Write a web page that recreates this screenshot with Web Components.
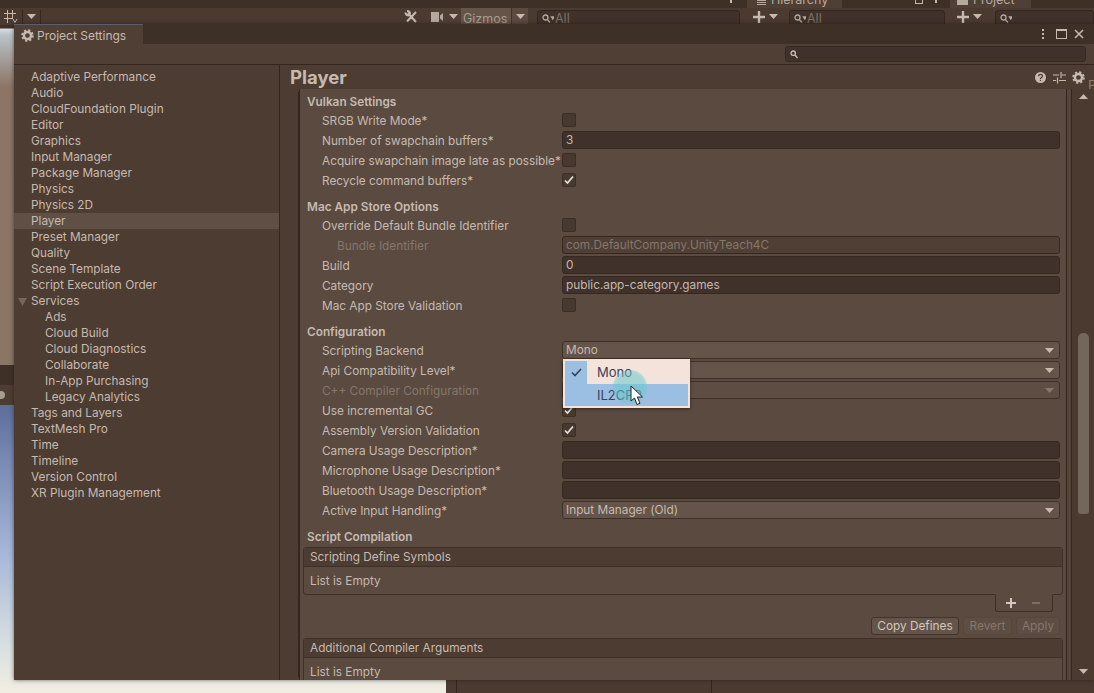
<!DOCTYPE html>
<html lang="en">
<head>
<meta charset="utf-8">
<title>Project Settings</title>
<style>
  html, body { margin: 0; height: 100%; overflow: hidden; background: #4a3a30; }
  body { font: 11.8px/16px Inter, "Liberation Sans", sans-serif; color: #c6bab0; }
</style>
</head>
<body>

<editor-backdrop></editor-backdrop>

<settings-window>
  <side-list slot="side">
    <side-item>Adaptive Performance</side-item>
    <side-item>Audio</side-item>
    <side-item>CloudFoundation Plugin</side-item>
    <side-item>Editor</side-item>
    <side-item>Graphics</side-item>
    <side-item>Input Manager</side-item>
    <side-item>Package Manager</side-item>
    <side-item>Physics</side-item>
    <side-item>Physics 2D</side-item>
    <side-item selected>Player</side-item>
    <side-item>Preset Manager</side-item>
    <side-item>Quality</side-item>
    <side-item>Scene Template</side-item>
    <side-item>Script Execution Order</side-item>
    <side-item open>Services</side-item>
    <side-item child>Ads</side-item>
    <side-item child>Cloud Build</side-item>
    <side-item child>Cloud Diagnostics</side-item>
    <side-item child>Collaborate</side-item>
    <side-item child>In-App Purchasing</side-item>
    <side-item child>Legacy Analytics</side-item>
    <side-item>Tags and Layers</side-item>
    <side-item>TextMesh Pro</side-item>
    <side-item>Time</side-item>
    <side-item>Timeline</side-item>
    <side-item>Version Control</side-item>
    <side-item>XR Plugin Management</side-item>
  </side-list>

  <player-section title="Vulkan Settings">
    <set-row label="SRGB Write Mode*"><check-box></check-box></set-row>
    <set-row label="Number of swapchain buffers*"><text-field>3</text-field></set-row>
    <set-row label="Acquire swapchain image late as possible*"><check-box></check-box></set-row>
    <set-row label="Recycle command buffers*"><check-box checked></check-box></set-row>
  </player-section>

  <player-section title="Mac App Store Options">
    <set-row label="Override Default Bundle Identifier"><check-box></check-box></set-row>
    <set-row label="Bundle Identifier" indent dim><text-field dim>com.DefaultCompany.UnityTeach4C</text-field></set-row>
    <set-row label="Build"><text-field>0</text-field></set-row>
    <set-row label="Category"><text-field>public.app-category.games</text-field></set-row>
    <set-row label="Mac App Store Validation"><check-box></check-box></set-row>
  </player-section>

  <player-section title="Configuration">
    <set-row label="Scripting Backend"><drop-field>Mono</drop-field></set-row>
    <set-row label="Api Compatibility Level*"><drop-field></drop-field></set-row>
    <set-row label="C++ Compiler Configuration" dim><drop-field dim></drop-field></set-row>
    <set-row label="Use incremental GC"><check-box checked></check-box></set-row>
    <set-row label="Assembly Version Validation"><check-box checked></check-box></set-row>
    <set-row label="Camera Usage Description*"><text-field></text-field></set-row>
    <set-row label="Microphone Usage Description*"><text-field></text-field></set-row>
    <set-row label="Bluetooth Usage Description*"><text-field></text-field></set-row>
    <set-row label="Active Input Handling*"><drop-field>Input Manager (Old)</drop-field></set-row>
  </player-section>

  <player-section title="Script Compilation">
    <empty-list title="Scripting Define Symbols" footer></empty-list>
    <action-bar>
      <mini-button style="width:88px">Copy Defines</mini-button>
      <mini-button off style="width:49px">Revert</mini-button>
      <mini-button off style="width:44px">Apply</mini-button>
    </action-bar>
    <empty-list title="Additional Compiler Arguments"></empty-list>
  </player-section>

  <popup-menu slot="over">
    <popup-item checked>Mono</popup-item>
    <popup-item active>IL2CPP</popup-item>
  </popup-menu>
</settings-window>

<script>
// helper: every element is just a style + markup in an open shadow root
function shadow(el, html) {
  el.attachShadow({ mode: "open" }).innerHTML = html;
}

const GEAR = (size, color) => `
  <svg width="${size}" height="${size}" viewBox="0 0 16 16">
    <circle cx="8" cy="8" r="4.4" fill="none" stroke="${color}" stroke-width="3"/>
    <circle cx="8" cy="8" r="6.4" fill="none" stroke="${color}" stroke-width="2.6" stroke-dasharray="2.6 2.43"/>
  </svg>`;

const ARROW = (color) => `
  <svg width="9" height="5" viewBox="0 0 9 5" style="flex:none"><path d="M0 0h9L4.500 5z" fill="${color}"/></svg>`;

const PLUS = `
  <svg width="12" height="12" viewBox="0 0 12 12" style="flex:none"><path d="M4.800 0h2.400v4.800H12v2.400H7.200V12H4.800V7.200H0V4.800h4.800z" fill="#c6bab0"/></svg>`;

const LENS = `
  <svg width="12" height="10" viewBox="0 0 12 10" fill="none" stroke="#b5a89d" stroke-width="1.300" style="flex:none"><circle cx="3.500" cy="3.500" r="2.500"/><path d="M5.300 5.500l2.700 3M9.500 3h2.500l-1.250 2z"/></svg>`;

// --- the editor behind the window
class EditorBackdrop extends HTMLElement {
  connectedCallback() {
    shadow(this, /* html */`
      <style>
        :host { display: flex; flex-direction: column; height: 693px; width: 1094px; font-size: 12.500px; color: #a99c91; }
        .tabs { height: 8px; background: #3f3027; display: flex; align-items: flex-start; overflow: hidden; }
        .tab { flex: none; background: #4f3f35; height: 8px; display: flex; align-items: flex-start; box-sizing: border-box; overflow: hidden; gap: 5px; color: #b5a89d; }
        .tab span { margin-top: -8px; }
        .tab.h { margin-left: 15px; width: 95px; padding-left: 10px; }
        .tab.p { margin-left: 13px; width: 81px; padding-left: 7px; }
        .tab i { display: block; flex: none; width: 11px; height: 5px; background: #b5a89d; }
        .tab i.l { height: 1px; width: 9px; margin-top: 2px; box-shadow: 0 -2px #b5a89d, 0 2px #b5a89d; }
        .mini { flex: none; margin-left: 73px; width: 8px; height: 4px; border: 1px solid #c6bab0; border-top: 0; box-sizing: border-box; }
        .dot { flex: none; width: 2px; height: 3px; background: #c6bab0; }
        .tools { height: 17px; background: #4a3a30; display: flex; align-items: center; overflow: hidden; }
        .grid { margin-left: 3px; width: 15px; height: 15px; flex: none; }
        .sep { flex: none; width: 1px; height: 14px; background: #35281f; margin: 0 4px; }
        .gap { flex: none; display: block; }
        .cam { flex: none; height: 17px; width: 30px; margin-left: 13px; background: #4f3f35; display: flex; align-items: center; gap: 6px; box-sizing: border-box; }
        .giz { flex: none; background: #64544a; height: 17px; width: 50px; padding-left: 2px; box-sizing: border-box; line-height: 21px; }
        .gizarrow { flex: none; background: #5a4a40; height: 17px; width: 17px; display: flex; align-items: center; justify-content: center; border-left: 1px solid #40312a; box-sizing: border-box; }
        .search { flex: none; height: 16px; box-sizing: border-box; margin-top: 3px; background: #40312a; border: 1px solid #33261e; border-bottom: 0; border-radius: 4px 4px 0 0; padding-left: 4px; display: flex; align-items: center; gap: 1px; color: #7d7066; }
        .rest { flex: 1; display: grid; grid-template-columns: 446px 1fr; min-height: 0; }
        .scene { display: flex; flex-direction: column; }
        .sky { height: 340px; background: linear-gradient(#3f3027 0, #3f3027 3px, #d6dde2 4px, #b9c3c8 10px, #8c7566 62px, #8b7565 340px); }
        .strip { height: 20px; background: #3f3027; }
        .slide { height: 20px; background: #4d3d33; position: relative; }
        .slide i { position: absolute; left: -3px; top: 6px; width: 8px; height: 8px; border-radius: 50%; background: #a99c91; }
        .game { flex: 1; background: linear-gradient(#5d6e9d 0, #a7b8d9 150px, #d7e0e0 240px, #f3eee2 290px); }
        .lower { background: #4a3a30; display: grid; grid-template-columns: 11px 255px 1fr; }
        .lower div { border-right: 1px solid #33261e; }
      </style>
      <div class="tabs">
        <div class="dot" style="margin-left:730px"></div>
        <div class="tab h"><i class="l"></i><span>Hierarchy</span></div>
        <div class="mini"></div>
        <div class="dot" style="margin-left:12px"></div>
        <div class="tab p"><i></i><span>Project</span></div>
      </div>
      <div class="tools">
        <svg class="grid" viewBox="0 0 15 15" fill="none" stroke="#c6bab0" stroke-width="1">
          <path d="M1 4.500h12M1 9.500h9M4.500 1v13M9.500 1v9M10 10l2 3.500 2-3.500"/>
        </svg>
        <span class="sep"></span>
        ${ARROW("#c6bab0")}
        <span class="sep"></span>
        <span class="gap" style="width:359px"></span>
        <svg width="14" height="14" viewBox="0 0 14 14" fill="none" stroke="#c6bab0" stroke-width="2" style="flex:none"><path d="M4 3l8 9M1.500 2.500a3 3 0 0 0 3.500 3M3 1a3 3 0 0 1 3 3M12 2L3 11.500"/></svg>
        <div class="cam">
          <svg width="12" height="10" viewBox="0 0 12 10" style="flex:none"><path d="M0 0h8v10H0zM9 3.500l3-2.500v8l-3-2.500z" fill="#b5a89d"/></svg>
          ${ARROW("#c6bab0")}
        </div>
        <div class="giz">Gizmos</div>
        <div class="gizarrow">${ARROW("#c6bab0")}</div>
        <span class="gap" style="width:9px"></span>
        <div class="search" style="width:203px">${LENS}All</div>
        <span class="gap" style="width:13px"></span>
        ${PLUS}<span class="gap" style="width:4px"></span>${ARROW("#c6bab0")}
        <span class="gap" style="width:11px"></span>
        <div class="search" style="width:156px">${LENS}All</div>
        <span class="gap" style="width:12px"></span>
        ${PLUS}<span class="gap" style="width:4px"></span>${ARROW("#c6bab0")}
        <span class="gap" style="width:13px"></span>
        <div class="search" style="flex:1">${LENS}</div>
      </div>
      <div class="rest">
        <div class="scene">
          <div class="sky"></div>
          <div class="strip"></div>
          <div class="slide"><i></i></div>
          <div class="game"></div>
        </div>
        <div class="lower"><div></div><div></div><span></span></div>
      </div>
    `);
  }
}

// --- the floating window: tab strip, search strip, sidebar + player pane
class SettingsWindow extends HTMLElement {
  connectedCallback() {
    shadow(this, /* html */`
      <style>
        :host {
          position: absolute; left: 14px; top: 24px; width: 1080px; height: 656px;
          display: flex; flex-direction: column; background: #4c3c32;
          box-shadow: 0 0 4px rgba(30,20,15,.6);
        }
        .tabbar { height: 20px; background: #3f3027; display: flex; flex: none; }
        .tab {
          width: 129px; height: 20px; box-sizing: border-box; background: #4f3f35; font-size: 12px;
          border-top: 1px solid #56606f; display: flex; align-items: center; gap: 3px; padding: 2px 0 0 7px;
        }
        .winbtns { margin-left: auto; display: flex; align-items: center; gap: 7px; padding-right: 10px; }
        .winbtns .max { width: 9px; height: 7px; border: 1px solid #c6bab0; border-top-width: 2px; }
        .dots { display: flex; flex-direction: column; gap: 2px; margin-right: 5px; }
        .dots i { width: 2px; height: 2px; background: #c6bab0; }
        .searchbar { height: 21px; flex: none; box-sizing: border-box; background: #4f3f35; border-bottom: 1px solid #33261e; display: flex; justify-content: flex-end; padding: 2px 8px 0 0; }
        .searchbar div { width: 301px; height: 16px; box-sizing: border-box; background: #40312a; border: 1px solid #38291f; border-radius: 3px; display: flex; align-items: center; padding-left: 4px; }
        .main { flex: 1; display: flex; min-height: 0; position: relative; }
        .side { width: 265px; flex: none; border-right: 1px solid #33261e; }
        .pane { flex: 1; display: flex; flex-direction: column; min-width: 0; }
        .head { height: 24px; flex: none; display: flex; align-items: center; padding: 0 9px 0 10px; font-size: 18.500px; font-weight: 700; position: relative; }
        .head span { flex: 1; }
        .head svg { margin-left: 6px; }
        .head b { position: absolute; right: -2px; top: 12px; font-size: 12px; font-weight: 400; color: #8d7f74; }
        .scroll { flex: 1; display: flex; min-height: 0; margin-left: 19px; box-shadow: -4px 0 0 -3px #33261e; }
        .body { width: 768px; flex: none; box-sizing: border-box; background: #5a4a40; border-left: 1px solid #33261e; border-right: 1px solid #33261e; padding: 3px 4px 0 3px; overflow: hidden; }
        .gutter { width: 4px; flex: none; background: #54443a; }
        .bar { flex: 1; position: relative; background: #4a3a30; border-left: 1px solid #33261e; }
        .bar i { position: absolute; left: 6px; width: 11px; top: 244px; height: 181px; background: #75665b; border-radius: 5px 5px 3px 3px; }
        .bar svg { position: absolute; left: 7px; }
      </style>
      <div class="tabbar">
        <div class="tab">${GEAR(13, "#c6bab0")}Project Settings</div>
        <div class="winbtns">
          <div class="dots"><i></i><i></i><i></i></div>
          <div class="max"></div>
          <svg width="10" height="10" viewBox="0 0 10 10"><path d="M1 1l8 8M9 1l-8 8" stroke="#c6bab0" stroke-width="1.500"/></svg>
        </div>
      </div>
      <div class="searchbar">
        <div><svg width="8" height="9" viewBox="0 0 8 9" fill="none" stroke="#c6bab0" stroke-width="1.400"><circle cx="3.200" cy="3.200" r="2.200"/><path d="M5 5l2.500 3"/></svg></div>
      </div>
      <div class="main">
        <div class="side"><slot name="side"></slot></div>
        <div class="pane">
          <div class="head">
            <span>Player</span>
            <svg width="11" height="11" viewBox="0 0 11 11"><circle cx="5.500" cy="5.500" r="5.500" fill="#c6bab0"/><path d="M3.700 4.200c0-2.400 3.700-2.400 3.700 0 0 1.400-1.900 1.300-1.900 2.700M5.500 7.700v1.300" fill="none" stroke="#4c3c32" stroke-width="1.300"/></svg>
            <svg width="13" height="13" viewBox="0 0 13 13" fill="none" stroke="#c6bab0" stroke-width="1.200" style="margin-left:7px"><path d="M0 4h6M9 4h4M8 1v6M0 9.500h3M6 9.500h7M4.500 6.500v6"/></svg>
            ${GEAR(13, "#c6bab0")}
            <b>P</b>
          </div>
          <div class="scroll">
            <div class="body"><slot></slot></div>
            <div class="gutter"></div>
            <div class="bar">
              <svg style="top:5px" width="9" height="5" viewBox="0 0 9 5"><path d="M0 5h9L4.500 0z" fill="#c6bab0"/></svg>
              <i></i>
              <svg style="top:580px" width="9" height="5" viewBox="0 0 9 5"><path d="M0 0h9L4.500 5z" fill="#c6bab0"/></svg>
            </div>
          </div>
        </div>
        <slot name="over"></slot>
      </div>
    `);
  }
}

class SideList extends HTMLElement {
  connectedCallback() {
    shadow(this, `<style>:host{display:block;padding-top:4px}</style><slot></slot>`);
  }
}

class SideItem extends HTMLElement {
  connectedCallback() {
    const open = this.hasAttribute("open");
    shadow(this, /* html */`
      <style>
        :host { display: block; height: 16px; line-height: 16px; padding-left: 17px; position: relative; white-space: nowrap; }
        :host([child]) { padding-left: 31px; }
        :host([selected]) { background: #5f4f45; }
        svg { position: absolute; left: 4px; top: 5px; }
      </style>
      ${open ? `<svg width="9" height="8" viewBox="0 0 9 8"><path d="M0 0h9L4.500 8z" fill="#75665c"/></svg>` : ""}
      <slot></slot>
    `);
  }
}

class PlayerSection extends HTMLElement {
  connectedCallback() {
    shadow(this, /* html */`
      <style>
        :host { display: block; margin-bottom: 6px; }
        .title { height: 19px; line-height: 20px; padding-left: 4px; font-weight: 600; }
      </style>
      <div class="title">${this.getAttribute("title")}</div>
      <slot></slot>
    `);
  }
}

class SetRow extends HTMLElement {
  connectedCallback() {
    shadow(this, /* html */`
      <style>
        :host { display: grid; grid-template-columns: 259px 498px; height: 20px; align-items: center; white-space: nowrap; }
        .label { padding-left: 19px; }
        :host([indent]) .label { padding-left: 34px; }
        :host([dim]) .label { color: #85776c; }
        /* los controles van 1px por encima del centro de la fila */
        ::slotted(*) { margin-bottom: 2px; }
      </style>
      <div class="label">${this.getAttribute("label")}</div>
      <slot></slot>
    `);
  }
}

class CheckBox extends HTMLElement {
  connectedCallback() {
    const on = this.hasAttribute("checked");
    shadow(this, /* html */`
      <style>
        :host { display: block; width: 14px; height: 14px; box-sizing: border-box; background: #483930; border: 1px solid #3c2e25; border-radius: 2px; }
        svg { display: block; margin: 1px; }
      </style>
      ${on ? `<svg width="10" height="10" viewBox="0 0 10 10"><path d="M1 5.500l2.500 2.500 5.500-6.500" fill="none" stroke="#e8dfd8" stroke-width="1.700"/></svg>` : ""}
    `);
  }
}

class TextField extends HTMLElement {
  connectedCallback() {
    shadow(this, /* html */`
      <style>
        :host { display: block; height: 18px; line-height: 17px; box-sizing: border-box; padding-left: 3px; background: #40312a; border: 1px solid #35281f; border-radius: 3px; }
        :host([dim]) { background: #4f3f35; color: #85776c; }
      </style>
      <slot></slot>
    `);
  }
}

class DropField extends HTMLElement {
  connectedCallback() {
    shadow(this, /* html */`
      <style>
        :host { display: flex; align-items: center; justify-content: space-between; height: 18px; box-sizing: border-box; padding: 0 5px 0 3px; background: #64544a; border: 1px solid #3f3027; border-radius: 3px; }
        :host([dim]) { background: #5d4d43; }
      </style>
      <span><slot></slot></span>${ARROW(this.hasAttribute("dim") ? "#85776c" : "#c6bab0")}
    `);
  }
}

class EmptyList extends HTMLElement {
  connectedCallback() {
    const foot = this.hasAttribute("footer");
    shadow(this, /* html */`
      <style>
        :host { display: block; width: 760px; position: relative; margin-top: 1px; }
        .frame { border: 1px solid #3f3027; border-radius: 3px; }
        .head { height: 18px; line-height: 18px; padding-left: 6px; background: #4c3c32; border-bottom: 1px solid #3f3027; }
        .body { height: 27px; line-height: 28px; padding-left: 6px; }
        .foot { position: relative; height: 19px; margin-top: -1px; }
        .foot div { position: absolute; right: 10px; top: 0; width: 58px; height: 18px; box-sizing: border-box; background: #5a4a40; border: 1px solid #3f3027; border-top: 1px solid #5a4a40; border-radius: 0 0 3px 3px; display: flex; align-items: center; gap: 16px; padding-left: 10px; }
      </style>
      <div class="frame">
        <div class="head">${this.getAttribute("title")}</div>
        <div class="body">List is Empty</div>
      </div>
      ${foot ? `<div class="foot"><div>
        <svg width="10" height="10" viewBox="0 0 10 10"><path d="M4 0h2v4h4v2H6v4H4V6H0V4h4z" fill="#d3c8be"/></svg>
        <svg width="8" height="10" viewBox="0 0 8 10"><path d="M0 4.200h8v1.600H0z" fill="#85776c"/></svg>
      </div></div>` : ""}
    `);
  }
}

class ActionBar extends HTMLElement {
  connectedCallback() {
    shadow(this, `<style>:host{display:flex;justify-content:flex-end;gap:4px;width:757px;height:20px;margin-top:4px}</style><slot></slot>`);
  }
}

class MiniButton extends HTMLElement {
  connectedCallback() {
    shadow(this, /* html */`
      <style>
        :host { display: block; height: 18px; line-height: 17px; box-sizing: border-box; text-align: center; background: #64544a; border: 1px solid #433429; border-radius: 3px; color: #d3c8be; }
        :host([off]) { background: #5d4d43; border-color: #56463c; color: #85776c; }
      </style>
      <slot></slot>
    `);
  }
}

// --- open dropdown with the mouse cursor on it
class PopupMenu extends HTMLElement {
  connectedCallback() {
    shadow(this, /* html */`
      <style>
        :host { position: absolute; left: 549px; top: 294px; width: 127px; height: 49px; box-sizing: border-box; padding: 2px; background: #f3e3da; box-shadow: 0 1px 3px rgba(30,20,15,.6); color: #3a4256; }
        .halo { position: absolute; left: 50px; top: 11px; width: 34px; height: 34px; border-radius: 50%; background: radial-gradient(rgba(105,200,205,.55) 55%, rgba(105,200,205,.1) 100%); }
        svg { position: absolute; left: 67px; top: 26px; }
      </style>
      <slot></slot>
      <div class="halo"></div>
      <svg width="14" height="21" viewBox="0 0 14 21"><path d="M1 1v15l3.500-3 2.500 6.500 3-1.200-2.700-6.300H12.500z" fill="#fff" stroke="#222" stroke-width="1"/></svg>
    `);
  }
}

class PopupItem extends HTMLElement {
  connectedCallback() {
    const on = this.hasAttribute("checked");
    shadow(this, /* html */`
      <style>
        :host { display: flex; height: 22.500px; align-items: center; font-size: 13px; }
        :host([active]) { background: #9bbfe3; }
        .mark { width: 22px; height: 100%; display: flex; align-items: center; justify-content: center; }
        :host([checked]) .mark { background: #9bbfe3; }
        .txt { padding-left: 10px; }
      </style>
      <div class="mark">${on ? `<svg width="11" height="9" viewBox="0 0 11 9"><path d="M1 4.500l3 3 6-6.500" fill="none" stroke="#34405a" stroke-width="1.600"/></svg>` : ""}</div>
      <div class="txt"><slot></slot></div>
    `);
  }
}

customElements.define("editor-backdrop", EditorBackdrop);
customElements.define("settings-window", SettingsWindow);
customElements.define("side-list", SideList);
customElements.define("side-item", SideItem);
customElements.define("player-section", PlayerSection);
customElements.define("set-row", SetRow);
customElements.define("check-box", CheckBox);
customElements.define("text-field", TextField);
customElements.define("drop-field", DropField);
customElements.define("empty-list", EmptyList);
customElements.define("action-bar", ActionBar);
customElements.define("mini-button", MiniButton);
customElements.define("popup-menu", PopupMenu);
customElements.define("popup-item", PopupItem);
</script>
</body>
</html>
